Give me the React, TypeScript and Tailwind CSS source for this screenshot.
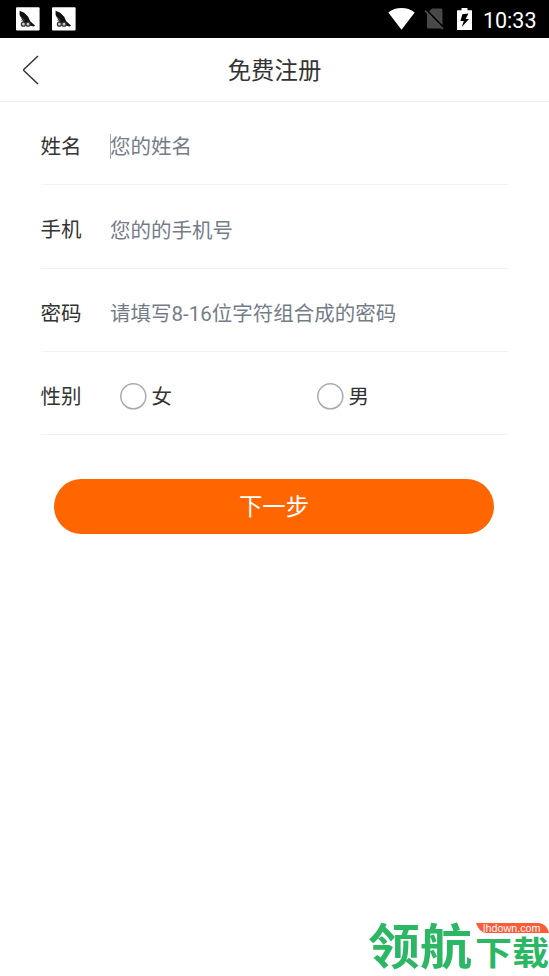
import type { ReactNode } from "react";

function NotificationIcon() {
  return (
    <svg className="w-6 h-6" viewBox="0 0 24 24">
      <rect x="0" y="0.3" width="23.6" height="23.2" rx="1" fill="#fff" />
      <path d="M3.6 3.8l4.6 2 4 4 2 4.4 4.8 4.4-1 1-3.6-.8-4-1.4-3-2.3-3.8-7z" fill="#111" />
      <path d="M4 9l4.4 4.8M5 13l4 3" stroke="#777" strokeWidth="0.8" />
      <circle cx="7.4" cy="17.2" r="2" fill="#ccc" stroke="#333" strokeWidth="1.2" />
      <circle cx="12" cy="17.2" r="2" fill="#ccc" stroke="#333" strokeWidth="1.2" />
    </svg>
  );
}

function StatusBar() {
  return (
    <div className="flex items-center justify-between h-[38px] bg-black pl-[15.5px] pr-[12.5px]">
      <div className="flex items-center gap-[12.5px]">
        <NotificationIcon />
        <NotificationIcon />
      </div>
      <div className="flex items-center">
        {/* wifi */}
        <svg className="w-[27px] h-[22px]" viewBox="0 0 27 22">
          <path d="M13.5 21.8L.3 4.4C4 1.5 8.6 0 13.5 0s9.5 1.5 13.2 4.4z" fill="#fff" />
        </svg>
        {/* no sim */}
        <svg className="w-[21px] h-[22px] ml-[9px]" viewBox="0 0 21 22">
          <path d="M8 .5h9q1.5 0 1.5 1.5v15.8L4.8 3.8z" fill="#484848" />
          <path d="M3 4.6L18.5 20.5H4.5q-1.5 0-1.5-1.5z" fill="#484848" />
          <path d="M2.2 1.6l18 18.4" stroke="#000" strokeWidth="1.4" />
          <path d="M1 2.6l18 18.4" stroke="#505050" strokeWidth="1.6" />
        </svg>
        {/* battery */}
        <svg className="w-[15px] h-[22px] ml-[12px]" viewBox="0 0 15 22">
          <path d="M4.5 0h6v2.3H15V22H0V2.3h4.5z" fill="#fff" />
          <path d="M11.4 5.4L5.4 6.2 3.4 13h3.4l-2 6L12 11H8.6z" fill="#000" />
        </svg>
        <span className="ml-[11px] text-[21.5px] leading-[36px] text-white pt-[3px]">10:33</span>
      </div>
    </div>
  );
}

function Row({ label, children }: { label: string; children: ReactNode }) {
  return (
    <div className="flex items-center h-[83.25px] border-b border-[#f2f2f2]">
      <span className="w-[69.5px] shrink-0 pt-[8px] text-[#333]">{label}</span>
      {children}
    </div>
  );
}

function TextField({ placeholder }: { placeholder: string }) {
  return (
    <input
      className="flex-1 min-w-0 h-[30px] mt-[8.5px] bg-transparent outline-none placeholder:text-[#757c89] placeholder:opacity-100"
      placeholder={placeholder}
    />
  );
}

function Radio({ label }: { label: string }) {
  return (
    <label className="flex items-center w-[197px] text-[#333]">
      <svg className="w-[27px] h-[27px] mt-[7px] mr-[5px]" viewBox="0 0 27 27">
        <circle cx="13.3" cy="13.3" r="12.5" fill="none" stroke="#aaa" strokeWidth="1.5" />
      </svg>
      <span className="pt-[8px]">{label}</span>
    </label>
  );
}

function Watermark() {
  return (
    <div className="absolute right-0 bottom-[5px] flex w-[180px] h-[50px] text-[#2bb763]">
      <span className="w-[106px] h-[50px] -ml-px mr-px text-[52px] leading-[50px] font-bold whitespace-nowrap origin-bottom-left scale-y-[0.91]">
        领航
      </span>
      <div className="flex flex-col w-[74px]">
        <div className="relative h-[13px]">
          <svg className="absolute left-[1px] top-[2px] w-[73px] h-[10px]" viewBox="0 0 73 10">
            <path d="M0 0h63q8 1 10 10H10Q3 9 0 0z" fill="#ff5b36" />
          </svg>
          <span className="absolute left-[8px] top-[1px] text-[10.8px] leading-[12px] text-white font-['Liberation_Sans',sans-serif]">
            lhdown.com
          </span>
        </div>
        <span className="h-[36px] text-[37px] leading-[36px] font-bold whitespace-nowrap origin-bottom-left scale-y-[0.9]">
          下载
        </span>
      </div>
    </div>
  );
}

export default function App() {
  return (
    <div className="relative flex flex-col w-full h-[976px] overflow-hidden bg-white text-[20.5px] leading-[30px] font-['Roboto','Noto_Sans_CJK_SC',sans-serif]">
      <StatusBar />

      {/* Header */}
      <header className="grid grid-cols-[60px_1fr_60px] items-center h-16 border-b border-[#f0f0f0]">
        <svg className="w-[18px] h-[30px] ml-[22px]" viewBox="0 0 18 30">
          <path d="M16 1L2 14.2q-.8.8 0 1.6L16 29" fill="none" stroke="#333" strokeWidth="1.5" />
        </svg>
        <h1 className="pt-[2px] text-center text-[23.4px] text-[#333]">免费注册</h1>
      </header>

      {/* Form */}
      <main className="pl-[40.5px] pr-[41px]">
        <Row label="姓名">
          <span className="w-px h-[25px] mt-[7px] -mr-px bg-[#aaa]" />
          <TextField placeholder="您的姓名" />
        </Row>
        <Row label="手机">
          <TextField placeholder="您的的手机号" />
        </Row>
        <Row label="密码">
          <TextField placeholder="请填写8-16位字符组合成的密码" />
        </Row>
        <Row label="性别">
          <div className="flex pl-[9.5px]">
            <Radio label="女" />
            <Radio label="男" />
          </div>
        </Row>
        <div className="pl-[13.5px] pr-[14px] pt-[44px]">
          <button className="w-full h-[55px] pt-[1px] rounded-full bg-[#ff6600] text-[23.4px] text-white">
            下一步
          </button>
        </div>
      </main>

      <Watermark />
    </div>
  );
}
